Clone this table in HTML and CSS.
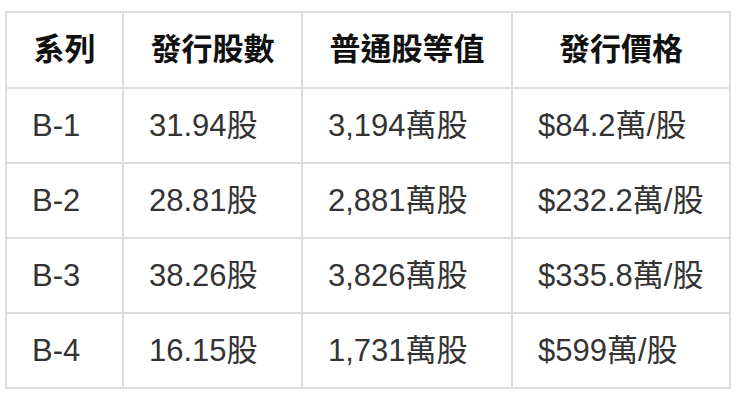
FILE: index.html
```html
<!DOCTYPE html>
<html lang="zh-Hant">
<head>
<meta charset="utf-8">
<link rel="stylesheet" href="styles.css">
</head>
<body>
<table class="data">
  <colgroup>
    <col class="c1"><col class="c2"><col class="c3"><col class="c4">
  </colgroup>
  <thead>
    <tr class="head"><th>系列</th><th>發行股數</th><th>普通股等值</th><th>發行價格</th></tr>
  </thead>
  <tbody>
    <tr><td>B-1</td><td>31.94股</td><td>3,194萬股</td><td>$84.2萬/股</td></tr>
    <tr><td>B-2</td><td>28.81股</td><td>2,881萬股</td><td>$232.2萬/股</td></tr>
    <tr><td>B-3</td><td>38.26股</td><td>3,826萬股</td><td>$335.8萬/股</td></tr>
    <tr><td>B-4</td><td>16.15股</td><td>1,731萬股</td><td>$599萬/股</td></tr>
  </tbody>
</table>
</body>
</html>
```
FILE: styles.css
```css
html, body {
  margin: 0;
  padding: 0;
  background: #ffffff;
}

.data {
  border-collapse: collapse;
  table-layout: fixed;
  margin: 11px 0 0 5px;
  font-family: "Liberation Sans", "Noto Sans CJK TC", sans-serif;
  font-size: 31px;
  color: #333333;
}

.c1 { width: 117px; }
.c2 { width: 179px; }
.c3 { width: 210px; }
.c4 { width: 218px; }

.data th,
.data td {
  border: 2px solid #dddddd;
  height: 73px;
  padding: 0 0 0 25px;
  text-align: left;
  vertical-align: middle;
  white-space: nowrap;
  line-height: 1.2;
}

.data th {
  padding: 0;
  text-align: center;
  font-weight: bold;
  color: #111111;
}

.data .head th {
  height: 74px;
}
```
